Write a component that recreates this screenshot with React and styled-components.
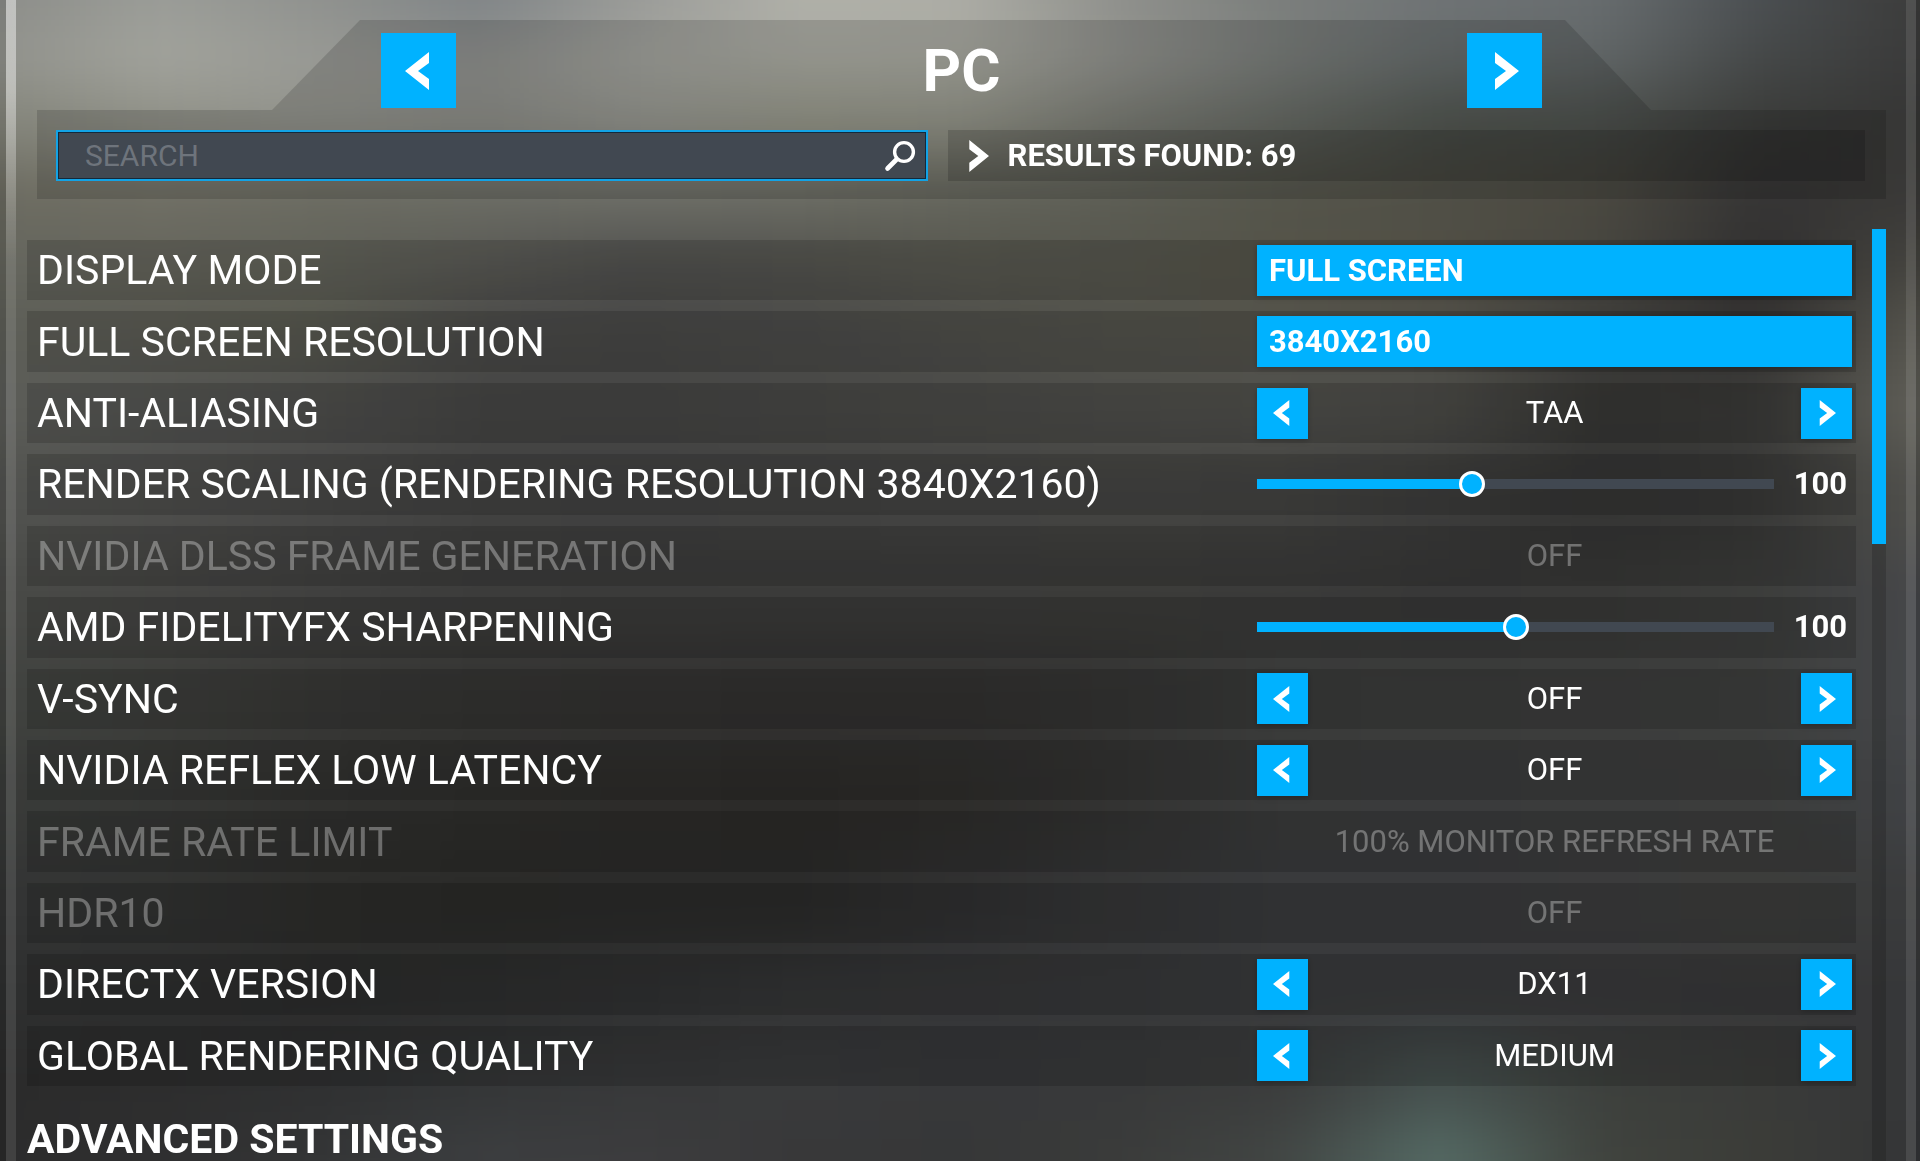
import React, { useState } from "react";
import styled, { createGlobalStyle, css } from "styled-components";

const GlobalStyle = createGlobalStyle`
  * {
    box-sizing: border-box;
  }
  body {
    margin: 0;
    background: #3a3a3a;
    color: #fff;
    font-family: Roboto, "Liberation Sans", sans-serif;
    overflow: hidden;
  }
  button, input, select {
    font-family: inherit;
    color: inherit;
    border: 0;
    border-radius: 0;
    margin: 0;
    padding: 0;
  }
`;

const BLUE = "#00b2ff";

// blurred hangar behind the menu: one strip of colours per height
const STRIPS = [
  [0, "#8c8d89 #9a9c97 #8f918e #7e8386 #9a9b98 #b0b0a9 #acaca5 #8e8f8b #7b7e7c #6f7375 #686d6f #4b4f52 #3c3c3b"],
  [60, "#93948e #a3a49d #999a95 #929390 #a4a59f #acada4 #abaca3 #949590 #7c807d #686e6e #606566 #454848 #3a3a3a"],
  [120, "#83847a #8f9087 #93948d #8d8e88 #969790 #969789 #949589 #7a7c74 #666a64 #515650 #4c504c #3a3b39 #353534"],
  [200, "#6c6b60 #6f6e64 #6a6a60 #6a6b63 #6b6c65 #6a6b63 #63645b #5b5c53 #54544a #504f46 #4a4840 #353434 #3a3937"],
  [260, "#65665e #66665d #63645b #5b5b56 #51514f #54544f #595950 #57574e #555449 #514f45 #474640 #302f2f #45443f"],
  [330, "#5d5e57 #5c5c54 #58594f #4a4a48 #484847 #4b4b49 #4f4f4b #53534c #54534b #504e47 #3c3b38 #32302f #56554e"],
  [400, "#5c5d58 #545553 #4f4f4d #464645 #464645 #484846 #4b4b48 #4e4e4a #50504c #4c4c48 #373735 #3b3b39 #605f58"],
  [500, "#525350 #4e4e4c #484847 #424241 #414141 #424241 #434342 #444442 #434341 #3c3c3b #343433 #383837 #50504c"],
  [600, "#494a47 #454543 #40403f #3c3c3b #3b3b3a #3b3b3a #3b3b3a #3b3b39 #3a3a39 #383838 #393938 #3c3d3b #46474a"],
  [700, "#414340 #3d3e3b #383836 #343432 #333231 #323130 #323130 #343433 #3a3b3a #3b3c3b #3c3d3c #3e3f3e #45474a"],
  [800, "#393b39 #363735 #31312f #2e2e2c #2d2c2a #2c2b29 #2e2d2b #333332 #3a3b3b #3a3b3c #3b3c3c #3c3d3c #404245"],
  [900, "#333434 #323332 #2d2d2b #2b2b29 #2b2b2a #2b2b2a #303031 #353637 #393a3c #393a3c #3b3b3c #3c3d3b #3a3b3c"],
  [1000, "#2e2f2f #2d2e2e #2c2c2c #2d2e2e #303132 #343536 #353638 #373839 #393a3c #393a3c #39393b #383839 #363739"],
  [1080, "#2b2b2b #2d2d2d #2f3031 #343637 #38393a #393a3b #37383a #38393a #3b3c3c #46514f #3d403d #3a3b39 #353638"],
  [1161, "#2c2c2c #2f2f30 #343536 #3c3e40 #3c3c3e #383839 #363738 #3a3b3a #424644 #556b65 #40433e #3b3c38 #343537"],
];

const BackdropSvg = styled.svg`
  position: fixed;
  inset: 0;
  width: 100%;
  height: 100%;
  z-index: -1;
`;

const Backdrop = () => (
  <BackdropSvg viewBox="0 0 1920 1161" preserveAspectRatio="none" aria-hidden="true">
    <defs>
      <filter id="soft" filterUnits="userSpaceOnUse" x="-200" y="-200" width="2320" height="1561" colorInterpolationFilters="sRGB">
        <feGaussianBlur stdDeviation="24 28" />
      </filter>
      {STRIPS.map(([y, colors]) => (
        <linearGradient key={y} id={`strip${y}`} gradientUnits="userSpaceOnUse" x1="0" x2="1920" y1="0" y2="0">
          {colors.split(" ").map((color, i) => (
            <stop key={i} offset={i / 12} stopColor={color} />
          ))}
        </linearGradient>
      ))}
    </defs>
    <g filter="url(#soft)">
      {STRIPS.map(([y], i) => {
        const top = i === 0 ? -200 : (STRIPS[i - 1][0] + y) / 2;
        return <rect key={y} x="-200" y={top} width="2320" height={1400 - top} fill={`url(#strip${y})`} />;
      })}
    </g>
  </BackdropSvg>
);

const Screen = styled.div`
  display: flex;
  min-height: 100vh;
`;

const Edge = styled.div`
  flex: 0 0 ${(props) => props.$size}px;
  background: rgba(0, 0, 0, 0.12);
`;

const Rail = styled.div`
  flex: 0 0 10px;
  background: ${(props) =>
    props.$bright
      ? "linear-gradient(rgba(255, 255, 255, 0.45), rgba(255, 255, 255, 0.42) 90px, rgba(255, 255, 255, 0.1) 260px)"
      : "rgba(255, 255, 255, 0.1)"};
`;

const Content = styled.main`
  flex: 1;
  min-width: 0;
  height: 100vh;
  display: flex;
  flex-direction: column;
  padding: 20px 20px 0 11px;
`;

const Header = styled.header`
  margin-left: 10px;
`;

const Tab = styled.div`
  display: flex;
  justify-content: space-between;
  align-items: center;
  height: 90px;
  margin: 0 235px;
  padding: 11px 109px 0;
  background: rgba(0, 0, 0, 0.14);
  clip-path: polygon(88px 0, calc(100% - 86px) 0, 100% 100%, 0 100%);
`;

const Title = styled.h1`
  margin: 0;
  font-size: 60px;
  line-height: 75px;
  font-weight: 700;
`;

const SearchBar = styled.div`
  display: grid;
  grid-template-columns: 19fr 20fr;
  gap: 20px;
  padding: 20px 21px 18px 19px;
  background: rgba(0, 0, 0, 0.14);
`;

const SearchField = styled.label`
  display: flex;
  align-items: center;
  height: 51px;
  padding-right: 10px;
  background: #414851;
  border: 2px solid #12a3e6;
  box-shadow: inset 0 0 0 1px #14293b;
`;

const SearchInput = styled.input`
  flex: 1;
  min-width: 0;
  height: 47px;
  padding-left: 27px;
  background: transparent;
  font-size: 30px;
  outline: none;
  &::placeholder {
    color: #6e747c;
    opacity: 1;
  }
`;

const Results = styled.div`
  display: flex;
  align-items: center;
  gap: 19px;
  height: 51px;
  padding-left: 18px;
  background: rgba(0, 0, 0, 0.16);
  font-size: 31px;
  line-height: 50px;
  font-weight: 700;
`;

const Body = styled.div`
  flex: 1;
  min-height: 0;
  display: grid;
  grid-template-columns: 1fr 14px;
  gap: 16px;
  margin-top: 30px;
`;

const Settings = styled.div`
  min-width: 0;
  padding-top: 11px;
`;

const List = styled.div`
  display: grid;
  grid-auto-rows: 1fr;
  gap: 11px;
  min-height: 846px;
`;

const Row = styled.div`
  display: flex;
  justify-content: space-between;
  align-items: center;
  padding: 0 4px 0 10px;
  background: rgba(0, 0, 0, 0.15);
  ${(props) =>
    props.$disabled &&
    css`
      color: rgba(255, 255, 255, 0.32);
    `}
`;

const Name = styled.label`
  font-size: 41px;
  line-height: 60px;
  white-space: nowrap;
`;

const Control = styled.div`
  flex: 0 0 595px;
  display: flex;
  align-items: center;
  height: 51px;
  font-size: 31px;
  line-height: 50px;
`;

const ArrowButton = styled.button`
  flex: none;
  display: flex;
  align-items: center;
  justify-content: center;
  width: ${(props) => (props.$large ? 75 : 51)}px;
  height: ${(props) => (props.$large ? 75 : 51)}px;
  background: ${BLUE};
  cursor: pointer;
  box-shadow: ${(props) => (props.$large ? "none" : "0 1px 6px rgba(0, 0, 0, 0.25)")};
`;

const Value = styled.output`
  flex: 1;
  text-align: center;
`;

const Dropdown = styled.select`
  appearance: none;
  width: 100%;
  height: 51px;
  padding: 0 12px;
  background: ${BLUE};
  font-size: 31px;
  font-weight: 700;
  box-shadow: 0 1px 6px rgba(0, 0, 0, 0.25);
  cursor: pointer;
`;

const Range = styled.input`
  appearance: none;
  flex: 1;
  min-width: 0;
  height: 26px;
  background: linear-gradient(${BLUE}, ${BLUE}) left center / var(--fill) 10px no-repeat,
    linear-gradient(#414851, #414851) center / 100% 10px no-repeat;
  cursor: pointer;
  &::-webkit-slider-thumb {
    appearance: none;
    width: 26px;
    height: 26px;
    border: 3px solid #fff;
    border-radius: 50%;
    background: ${BLUE};
  }
`;

const Amount = styled.output`
  flex: 0 0 78px;
  padding-right: 5px;
  text-align: right;
  font-weight: 700;
`;

const Section = styled.h2`
  margin: 33px 0 0;
  font-size: 41px;
  line-height: 40px;
  font-weight: 700;
`;

const ScrollTrack = styled.div`
  background: rgba(0, 0, 0, 0.16);
`;

const ScrollThumb = styled.div`
  height: 315px;
  background: ${BLUE};
`;

// the tip side is flush, the open side keeps a little room
const Chevron = ({ left, width, height }) => (
  <svg width={width} height={height} viewBox="0 0 28 38" preserveAspectRatio="none" fill="#fff" aria-hidden="true">
    <path d={left ? "M24 0 L0 19 L24 38 V27 L13 19 L24 11 Z" : "M4 0 L28 19 L4 38 V27 L15 19 L4 11 Z"} />
  </svg>
);

const SearchIcon = () => (
  <svg width="32" height="32" viewBox="0 0 32 32" fill="none" stroke="#fff" aria-hidden="true">
    <circle cx="20" cy="12" r="9.4" strokeWidth="3.4" />
    <path d="M12.5 19.5 L3.5 28.5" strokeWidth="4.6" strokeLinecap="round" />
  </svg>
);

const SETTINGS = [
  { id: "display", name: "DISPLAY MODE", type: "select", options: ["FULL SCREEN", "WINDOWED"] },
  { id: "resolution", name: "FULL SCREEN RESOLUTION", type: "select", options: ["3840X2160", "2560X1440", "1920X1080"] },
  { id: "aa", name: "ANTI-ALIASING", type: "stepper", options: ["TAA", "FXAA", "OFF"] },
  { id: "scaling", name: "RENDER SCALING (RENDERING RESOLUTION 3840X2160)", type: "range", min: 30, max: 200, value: 100 },
  { id: "dlss", name: "NVIDIA DLSS FRAME GENERATION", type: "stepper", options: ["OFF"], disabled: true },
  { id: "sharpening", name: "AMD FIDELITYFX SHARPENING", type: "range", min: 0, max: 200, value: 100 },
  { id: "vsync", name: "V-SYNC", type: "stepper", options: ["OFF", "ON"] },
  { id: "reflex", name: "NVIDIA REFLEX LOW LATENCY", type: "stepper", options: ["OFF", "ON", "ON + BOOST"] },
  { id: "framerate", name: "FRAME RATE LIMIT", type: "stepper", options: ["100% MONITOR REFRESH RATE"], disabled: true },
  { id: "hdr", name: "HDR10", type: "stepper", options: ["OFF"], disabled: true },
  { id: "directx", name: "DIRECTX VERSION", type: "stepper", options: ["DX11", "DX12"] },
  { id: "quality", name: "GLOBAL RENDERING QUALITY", type: "stepper", options: ["MEDIUM", "HIGH-END", "ULTRA", "LOW-END"] },
];

const Stepper = ({ setting }) => {
  const [index, setIndex] = useState(0);
  const { id, name, options, disabled } = setting;
  const move = (step) => setIndex((index + step + options.length) % options.length);

  return (
    <Control>
      {!disabled && (
        <ArrowButton aria-label={`${name} previous`} onClick={() => move(-1)}>
          <Chevron left width={19} height={26} />
        </ArrowButton>
      )}
      <Value id={id}>{options[index]}</Value>
      {!disabled && (
        <ArrowButton aria-label={`${name} next`} onClick={() => move(1)}>
          <Chevron width={19} height={26} />
        </ArrowButton>
      )}
    </Control>
  );
};

const Slider = ({ setting }) => {
  const [value, setValue] = useState(setting.value);
  const { id, min, max } = setting;
  const fill = ((value - min) / (max - min)) * 100;

  return (
    <Control>
      <Range
        id={id}
        type="range"
        min={min}
        max={max}
        value={value}
        onChange={(e) => setValue(Number(e.target.value))}
        style={{ "--fill": `${fill}%` }}
      />
      <Amount htmlFor={id}>{value}</Amount>
    </Control>
  );
};

const Select = ({ setting }) => (
  <Control>
    <Dropdown id={setting.id}>
      {setting.options.map((option) => (
        <option key={option}>{option}</option>
      ))}
    </Dropdown>
  </Control>
);

const CONTROLS = { select: Select, stepper: Stepper, range: Slider };

const App = () => {
  const [query, setQuery] = useState("");

  return (
    <>
      <GlobalStyle />
      <Backdrop />
      <Screen>
        <Edge $size={6} />
        <Rail $bright />
        <Content>
          <Header>
            <Tab>
              <ArrowButton $large aria-label="Previous platform">
                <Chevron left width={28} height={38} />
              </ArrowButton>
              <Title>PC</Title>
              <ArrowButton $large aria-label="Next platform">
                <Chevron width={28} height={38} />
              </ArrowButton>
            </Tab>
            <SearchBar>
              <SearchField>
                <SearchInput
                  type="text"
                  aria-label="Search"
                  placeholder="SEARCH"
                  value={query}
                  onChange={(e) => setQuery(e.target.value)}
                />
                <SearchIcon />
              </SearchField>
              <Results>
                <Chevron width={23} height={32} />
                RESULTS FOUND: 69
              </Results>
            </SearchBar>
          </Header>
          <Body>
            <Settings>
              <List>
                {SETTINGS.map((setting) => {
                  const SettingControl = CONTROLS[setting.type];
                  return (
                    <Row key={setting.id} $disabled={setting.disabled}>
                      <Name htmlFor={setting.id}>{setting.name}</Name>
                      <SettingControl setting={setting} />
                    </Row>
                  );
                })}
              </List>
              <Section>ADVANCED SETTINGS</Section>
            </Settings>
            <ScrollTrack>
              <ScrollThumb />
            </ScrollTrack>
          </Body>
        </Content>
        <Rail />
        <Edge $size={4} />
      </Screen>
    </>
  );
};

export default App;
